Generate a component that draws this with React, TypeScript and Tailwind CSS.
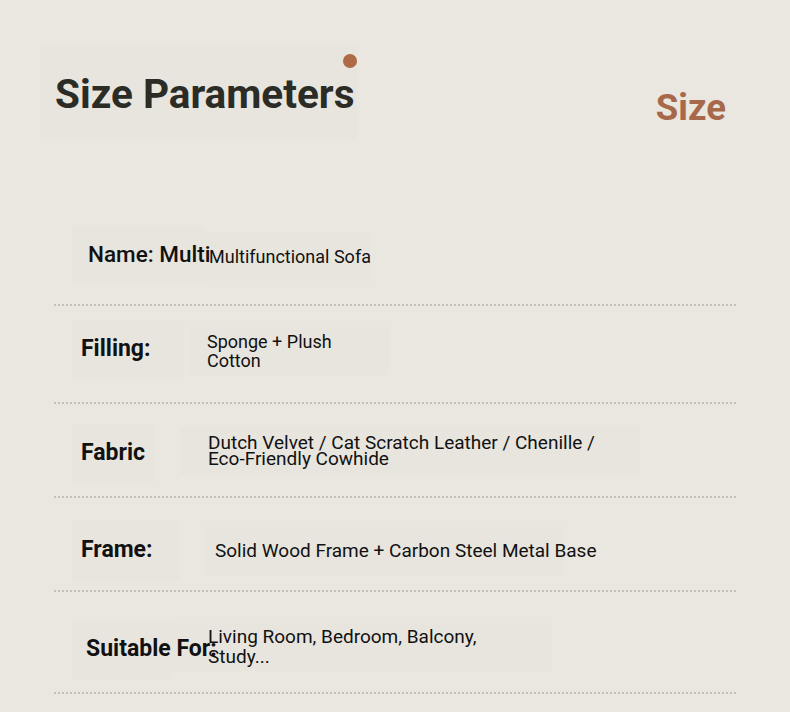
import React from "react";

const font = { fontFamily: "Roboto, 'Noto Sans', sans-serif" };

function Row({
  h,
  label,
  value,
  labelCls,
  valueCls,
  labelBox,
  valueBox,
}: {
  h: string;
  label: React.ReactNode;
  value: React.ReactNode;
  labelCls: string;
  valueCls: string;
  labelBox: string;
  valueBox: string;
}) {
  return (
    <div className={`${h} mx-[54px] border-b-2 border-dotted border-[#c4c0b6] flex items-center`}>
      <div className={`${labelBox} flex items-center bg-[#e7e5de] shrink-0 relative z-20`}>
        <span className={labelCls}>{label}</span>
      </div>
      <div className={`${valueBox} flex items-center bg-[#e7e5de] shrink-0 relative z-10`}>
        <div className={valueCls}>{value}</div>
      </div>
    </div>
  );
}

export default function App() {
  return (
    <div className="w-[790px] h-[712px] bg-[#eae7e0] overflow-hidden" style={font}>
      <div className="flex justify-between pt-[45px] h-[210px]">
        <div className="ml-[40px] w-[317px] h-[95px] bg-[#e7e5de] flex items-center pl-[15px] relative">
          <span className="text-[40.5px] font-bold text-[#2c2c27] leading-none mt-[4px]">
            Size Parameters
          </span>
          <span className="absolute left-[303px] top-[9px] w-[14px] h-[14px] rounded-full bg-[#ad6a44] blur-[0.7px]" />
        </div>
        <div className="pr-[64px] pt-[45px]">
          <span className="text-[36.5px] font-bold text-[#a8694a] leading-none">Size</span>
        </div>
      </div>

      <Row
        h="h-[96px]"
        labelBox="ml-[18px] w-[133px] h-[56px] pl-[16px] -mt-[5px]"
        valueBox="h-[48px] w-[165px] pl-[4px] -mt-[1px]"
        labelCls="text-[22.5px] font-medium text-[#111] whitespace-nowrap"
        valueCls="text-[18px] text-[#111] whitespace-nowrap"
        label="Name: Multi"
        value="Multifunctional Sofa"
      />
      <Row
        h="h-[98px]"
        labelBox="ml-[18px] w-[112px] h-[58px] pl-[9px] -mt-[10px]"
        valueBox="h-[48px] w-[200px] pl-[18px] -mt-[6px] ml-[5px]"
        labelCls="text-[23px] font-bold text-[#111]"
        valueCls="text-[18px] leading-[19px] text-[#111] w-[150px]"
        label="Filling:"
        value={
          <>
            Sponge + Plush
            <br />
            Cotton
          </>
        }
      />
      <Row
        h="h-[94px]"
        labelBox="ml-[18px] w-[82px] h-[60px] pl-[9px] mt-[7px]"
        valueBox="h-[48px] w-[460px] pl-[28px] mt-[2px] ml-[26px]"
        labelCls="text-[23px] font-bold text-[#111]"
        valueCls="text-[19px] leading-[16px] text-[#111] whitespace-nowrap"
        label="Fabric"
        value={
          <>
            Dutch Velvet / Cat Scratch Leather / Chenille /
            <br />
            Eco-Friendly Cowhide
          </>
        }
      />
      <Row
        h="h-[94px]"
        labelBox="ml-[18px] w-[108px] h-[60px] pl-[9px] mt-[13px]"
        valueBox="h-[48px] w-[360px] pl-[11px] mt-[14px] ml-[24px]"
        labelCls="text-[23px] font-bold text-[#111]"
        valueCls="text-[19px] text-[#111] whitespace-nowrap"
        label="Frame:"
        value="Solid Wood Frame + Carbon Steel Metal Base"
      />
      <Row
        h="h-[102px]"
        labelBox="ml-[18px] w-[100px] h-[60px] pl-[14px] mt-[15px]"
        valueBox="h-[48px] w-[390px] pl-[46px] mt-[9px] -ml-[10px]"
        labelCls="text-[23px] font-bold text-[#111] whitespace-nowrap"
        valueCls="text-[19px] leading-[20px] text-[#111] whitespace-nowrap"
        label="Suitable For:"
        value={
          <>
            Living Room, Bedroom, Balcony,
            <br />
            Study...
          </>
        }
      />
    </div>
  );
}
